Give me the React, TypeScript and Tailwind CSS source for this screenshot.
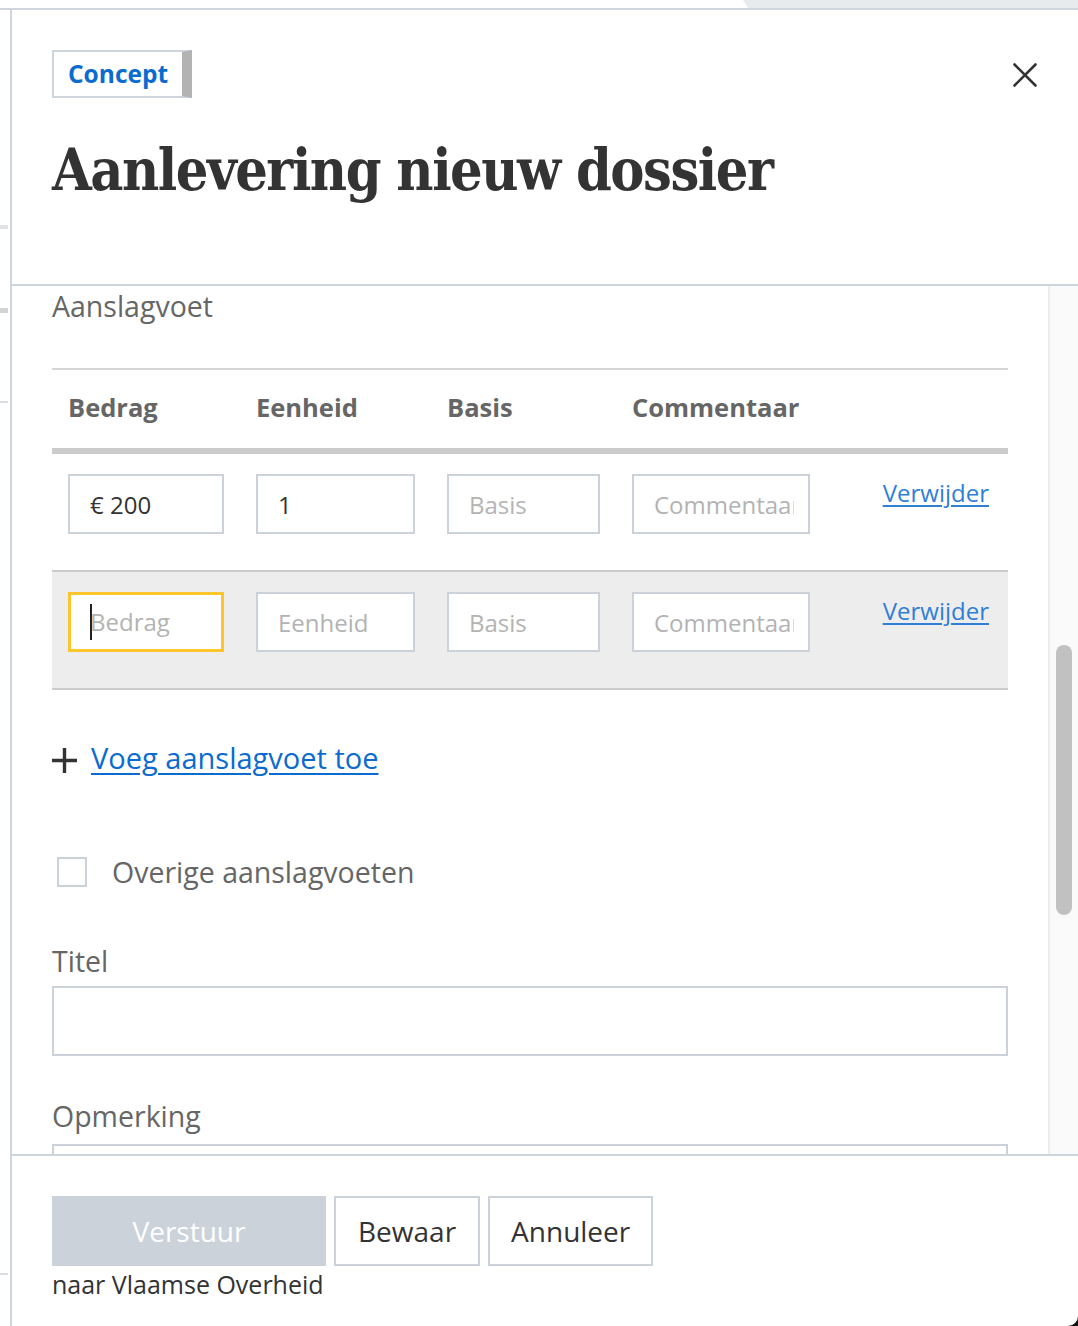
import React from "react";

const cols = "grid grid-cols-[188px_191px_185px_210px_182px]";

function Field({ value, placeholder }: { value?: string; placeholder: string }) {
  return (
    <input
      readOnly
      value={value ?? ""}
      placeholder={placeholder}
      className="block w-full h-[60px] border-2 border-[#cbd2da] bg-white pl-[20px] pr-[14px] text-[24px] text-[#333] placeholder:text-[#b3b3b3] outline-none font-['Open_Sans',sans-serif]"
    />
  );
}

function FocusedField({ placeholder }: { placeholder: string }) {
  return (
    <div className="flex items-center w-full h-[60px] border-[3px] border-[#fdc52c] bg-white pl-[19px] text-[24px] text-[#b3b3b3] overflow-hidden">
      <span className="block w-[2px] h-[36px] bg-[#222]" />
      <span className="-ml-[2px]">{placeholder}</span>
    </div>
  );
}

function RemoveLink() {
  return (
    <div className="px-[16px] flex justify-end pr-[19px]">
      <a className="mt-[4px] text-[24px] leading-[30px] text-[#2f7fd6] underline decoration-[2px] underline-offset-[3px] cursor-pointer">
        Verwijder
      </a>
    </div>
  );
}

export default function App() {
  return (
    <div className="relative w-[1078px] h-[1326px] overflow-hidden bg-white font-['Open_Sans',sans-serif]">
      {/* background page */}
      <div className="flex h-[8px]">
        <div className="flex-1" />
        <div className="w-[335px] bg-[#e8ebee] [clip-path:polygon(0_0,100%_0,100%_100%,5px_100%)]" />
      </div>
      <div className="h-[2px] bg-[#cfd5dd]" />
      <div className="flex flex-col w-[8px]">
        <div className="h-[215px]" />
        <div className="h-[4px] bg-[#dfe3e8]" />
        <div className="h-[79px]" />
        <div className="h-[5px] bg-[#d3d3d3]" />
        <div className="h-[88px]" />
        <div className="h-[2px] bg-[#d9dde2]" />
        <div className="h-[870px]" />
        <div className="h-[2px] bg-[#d9dde2]" />
      </div>

      {/* modal */}
      <div className="absolute left-[10px] top-[10px] right-0 bottom-0 bg-white border-l-2 border-[#cfd5dd] flex flex-col">
        {/* header */}
        <div className="flex-none pt-[40px] pl-[40px] pr-[41px] pb-[80px] border-b-2 border-[#cfd5dd]">
          <div className="flex items-center justify-between">
            <div className="flex h-[48px] border-y-2 border-l-2 border-r-[10px] border-l-[#cfd5dd] border-y-[#cfd5dd] border-r-[#b3b3b3] px-[14px]">
              <span className="text-[24.5px] leading-[44px] font-bold text-[#0b6bcf]">Concept</span>
            </div>
            <svg width="24" height="24" viewBox="0 0 24 24" className="mt-[2px]">
              <path d="M1.5 1.5 22.5 22.5M22.5 1.5 1.5 22.5" stroke="#333" strokeWidth="2.6" strokeLinecap="round" fill="none" />
            </svg>
          </div>
          <h1 className="mt-[38px] text-[57px] leading-[68px] tracking-[-1.5px] font-bold text-[#333] whitespace-nowrap font-['DejaVu_Serif_Condensed','DejaVu_Serif',serif] [font-stretch:condensed]">
            Aanlevering nieuw dossier
          </h1>
        </div>

        {/* body */}
        <div className="flex-1 min-h-0 flex">
          <div className="flex-1 overflow-hidden px-[40px] pt-[4px]">
            <div className="text-[28.5px] leading-[32px] text-[#666]">Aanslagvoet</div>

            <div className="mt-[46px] border-t-2 border-[#d6d6d6]">
              <div className={`${cols} pt-[22px] pb-[26px] text-[25.5px] leading-[30px] font-bold text-[#666]`}>
                <div className="px-[16px]">Bedrag</div>
                <div className="px-[16px]">Eenheid</div>
                <div className="px-[16px]">Basis</div>
                <div className="px-[16px]">Commentaar</div>
                <div />
              </div>
              <div className="h-[6px] bg-[#cbcbcb]" />
              <div className={`${cols} pt-[20px] pb-[36px] border-b-2 border-[#cbcbcb] bg-white`}>
                <div className="px-[16px]"><Field value="€ 200" placeholder="Bedrag" /></div>
                <div className="px-[16px]"><Field value="1" placeholder="Eenheid" /></div>
                <div className="px-[16px]"><Field placeholder="Basis" /></div>
                <div className="px-[16px]"><Field placeholder="Commentaar" /></div>
                <RemoveLink />
              </div>
              <div className={`${cols} pt-[20px] pb-[36px] border-b-2 border-[#cbcbcb] bg-[#ededed]`}>
                <div className="px-[16px]"><FocusedField placeholder="Bedrag" /></div>
                <div className="px-[16px]"><Field placeholder="Eenheid" /></div>
                <div className="px-[16px]"><Field placeholder="Basis" /></div>
                <div className="px-[16px]"><Field placeholder="Commentaar" /></div>
                <RemoveLink />
              </div>
            </div>

            <div className="mt-[50px] flex items-center h-[36px]">
              <svg width="25" height="25" viewBox="0 0 25 25" className="mt-[5px]">
                <path d="M12.5 0v25M0 12.5h25" stroke="#333" strokeWidth="3.4" fill="none" />
              </svg>
              <a className="ml-[14px] text-[29px] leading-[36px] text-[#0b6bcf] underline decoration-[2px] underline-offset-[4px] cursor-pointer">
                Voeg aanslagvoet toe
              </a>
            </div>

            <div className="mt-[78px] flex items-center h-[36px]">
              <div className="ml-[5px] w-[30px] h-[30px] border-2 border-[#cbd2da] bg-white" />
              <span className="ml-[25px] text-[28.5px] leading-[36px] text-[#666]">Overige aanslagvoeten</span>
            </div>

            <div className="mt-[53px] text-[28.5px] leading-[36px] text-[#666]">Titel</div>
            <div className="mt-[7px] h-[70px] border-2 border-[#cbd2da] bg-white" />

            <div className="mt-[42px] text-[28.5px] leading-[36px] text-[#666]">Opmerking</div>
            <div className="mt-[10px] h-[120px] border-2 border-[#cbd2da] bg-white" />
          </div>

          {/* scrollbar */}
          <div className="w-[30px] flex-none bg-[#fafafa] border-l-2 border-[#ececec] flex flex-col">
            <div className="h-[359px]" />
            <div className="ml-[6px] w-[16px] h-[270px] rounded-full bg-[#c1c1c1]" />
          </div>
        </div>

        {/* footer */}
        <div className="flex-none h-[172px] border-t-2 border-[#cfd5dd] pt-[40px] px-[40px]">
          <div className="flex gap-[8px]">
            <button className="w-[274px] h-[70px] bg-[#cbd2da] text-white text-[28px]">Verstuur</button>
            <button className="h-[70px] px-[22px] border-2 border-[#cbd2da] text-[#333] text-[28px] bg-white">Bewaar</button>
            <button className="h-[70px] px-[21px] border-2 border-[#cbd2da] text-[#333] text-[28px] bg-white">Annuleer</button>
          </div>
          <div className="mt-[3px] text-[25px] leading-[30px] text-[#333]">naar Vlaamse Overheid</div>
        </div>
      </div>

      {/* window corner */}
      <svg width="10" height="10" viewBox="0 0 10 10" className="absolute right-0 bottom-0">
        <path d="M10 0V10H0A10 10 0 0 0 10 0Z" fill="#111" />
      </svg>
    </div>
  );
}
